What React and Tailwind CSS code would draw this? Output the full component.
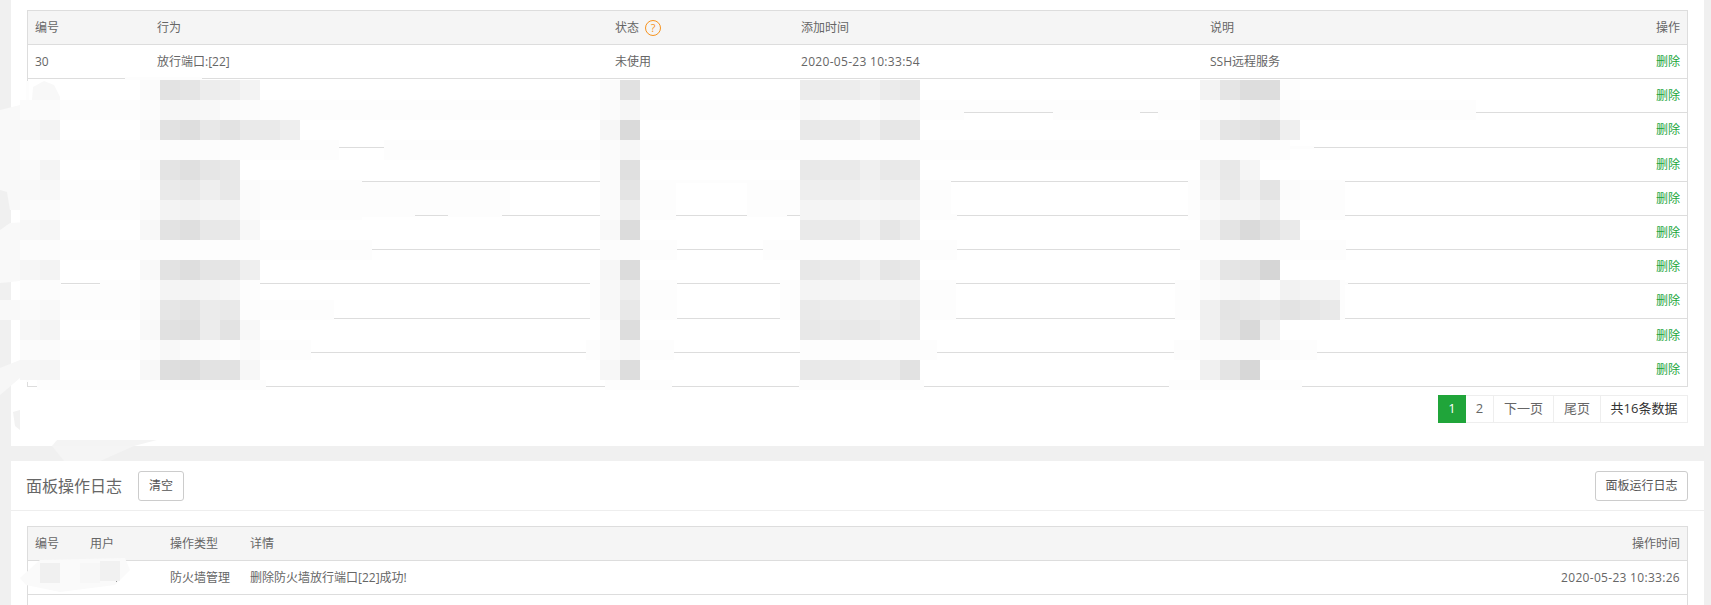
const columns = ['w-[122px]', 'w-[458px]', 'w-[186px]', 'w-[409px]', 'flex-1', 'text-right'];

// tile colours per mosaic block; one line per 20px row starting at y=80
const blocks = [
  { x: 20, rows: [[], ['fb', 'fb'], ['f8', 'f3'], ['fc', 'fc'], ['fa', 'f4'], ['f9', 'f8'], ['fb', 'fb'], ['f8', 'f6'], ['fc', 'fc'], ['f6', 'f3'], ['fc', 'fc'], ['fa', 'f9'], ['f7', 'f4'], ['fb', 'fb'], ['f6', 'f5']] },
  {
    x: 140,
    rows: [
      ['fb', 'e3', 'e5', 'ed', 'ee', 'f3'],
      ['fc', 'f7', 'f7', 'f8', 'fb', 'fc'],
      ['fa', 'e2', 'de', 'e8', 'e3', 'ea', 'ea', 'ee'],
      ['fd', 'fc', 'fc', 'fc', 'fd'],
      ['fb', 'e4', 'e0', 'e6', 'e8'],
      ['fd', 'ea', 'e8', 'ee', 'e8', 'fb'],
      ['fb', 'f3', 'f2', 'f4', 'f4', 'fb'],
      ['f8', 'e3', 'df', 'e8', 'e8', 'f8'],
      ['fd', 'fd', 'fd', 'fd'],
      ['f9', 'e3', 'de', 'e5', 'e5', 'ef'],
      ['fc', 'f4', 'f4', 'f5', 'f7'],
      ['fa', 'e6', 'e3', 'eb', 'e9', 'fd'],
      ['f9', 'e1', 'df', 'ec', 'e3', 'f8'],
      ['fc', 'f8', 'fa', 'fb', 'fd', 'fa'],
      ['f8', 'de', 'dc', 'e3', 'e2', 'f7'],
    ],
  },
  { x: 600, rows: [['fb', 'e1'], ['fb', 'f6'], ['f7', 'da'], ['fb', 'f7'], ['fb', 'e0'], ['fb', 'e4'], ['fb', 'ee'], ['f9', 'dc'], ['fc', 'fc'], ['f7', 'dc'], ['f8', 'ee'], ['f8', 'e8'], ['fb', 'dd'], ['fa', 'f8'], ['f7', 'dd']] },
  {
    x: 800,
    rows: [
      ['ec', 'ec', 'ed', 'f1', 'eb', 'e8'],
      ['f9', 'fa', 'fa', 'fb', 'f8', 'f8'],
      ['e9', 'ea', 'ea', 'f0', 'e7', 'e7'],
      ['fd', 'fd', 'fd', 'fd', 'fd', 'fd'],
      ['e9', 'ea', 'ea', 'f0', 'e9', 'e9'],
      ['ee', 'ee', 'ee', 'f1', 'ef', 'ef'],
      ['f4', 'f5', 'f5', 'f7', 'f5', 'f5'],
      ['ea', 'ea', 'ea', 'f2', 'e6', 'ec'],
      ['fd', 'fd', 'fd', 'fd', 'fd', 'fd'],
      ['e8', 'ea', 'ea', 'f1', 'e6', 'e8'],
      ['f4', 'f5', 'f6', 'f6', 'f6', 'f5'],
      ['ea', 'ec', 'ed', 'ee', 'ee', 'eb'],
      ['e8', 'ea', 'e8', 'e9', 'ec', 'eb'],
      ['fd', 'fd', 'fd', 'fd', 'fd', 'fd'],
      ['e9', 'ea', 'ea', 'ec', 'ec', 'e2'],
    ],
  },
  {
    x: 1200,
    rows: [
      ['f3', 'e5', 'dd', 'dd', 'fd'],
      ['fb', 'fa', 'f8', 'f6', 'fc'],
      ['f4', 'e5', 'e2', 'dd', 'ef'],
      ['fd', 'fd', 'fd', 'fd'],
      ['f2', 'e8', 'f5'],
      ['f4', 'ea', 'f1', 'e4', 'fb'],
      ['f9', 'f5', 'f4', 'ee', 'fd'],
      ['f2', 'e4', 'da', 'e2', 'ea'],
      ['fd', 'fd', 'fd', 'fd'],
      ['f4', 'e5', 'e3', 'd6'],
      ['fb', 'f9', 'f7', 'fb', 'f2', 'f4', 'f4'],
      ['f0', 'e4', 'e7', 'e8', 'e3', 'e6', 'e9'],
      ['f0', 'e6', 'd9', 'f0'],
      ['fc', 'fc', 'fb', 'fb', 'fc'],
      ['f0', 'e4', 'd7'],
    ],
  },
];

// stretches of each table line that the redaction paints over
const lineCovers = {
  78: [[125, 202]],
  112: [[20, 964], [1053, 1140], [1158, 1476]],
  147: [[20, 339], [384, 1314]],
  181: [[20, 362], [602, 951], [1196, 1324]],
  215: [[20, 415], [448, 502], [602, 676], [747, 787], [800, 957], [1188, 1345]],
  249: [[20, 372], [601, 677], [763, 957], [1180, 1346]],
  283: [[20, 61], [100, 260], [595, 677], [780, 944], [1181, 1348]],
  318: [[20, 334], [590, 676], [795, 956], [1175, 1341]],
  352: [[20, 311], [586, 674], [803, 937], [1174, 1317]],
  386: [[37, 266], [605, 672], [799, 924], [1169, 1302]],
};

// faint strokes left by the brush [x, y, w, h]
const bands = [
  [20, 100, 944, 20],
  [964, 100, 512, 12],
  [1053, 113, 87, 7],
  [1158, 113, 318, 7],
  [20, 140, 319, 20],
  [384, 140, 906, 20],
  [60, 180, 302, 40],
  [362, 182, 148, 33],
  [602, 180, 74, 40],
  [747, 180, 204, 35],
  [800, 215, 157, 5],
  [1188, 180, 157, 40],
  [20, 240, 352, 20],
  [601, 240, 76, 20],
  [763, 240, 194, 20],
  [1180, 240, 166, 20],
  [100, 280, 160, 20],
  [60, 285, 40, 15],
  [590, 280, 87, 40],
  [780, 280, 176, 40],
  [1175, 280, 170, 40],
  [20, 300, 314, 20],
  [37, 340, 274, 20],
  [586, 340, 88, 20],
  [803, 340, 134, 20],
  [1174, 340, 143, 20],
  [37, 380, 229, 10],
  [605, 380, 67, 10],
  [799, 380, 125, 10],
  [1169, 380, 133, 10],
];

function Redaction() {
  return (
    <svg className="absolute left-0 top-0 pointer-events-none" width="1711" height="605" shapeRendering="crispEdges">
      {bands.map(([x, y, w, h]) => (
        <rect key={`${x}-${y}`} x={x} y={y} width={w} height={h} fill="#fdfdfd" />
      ))}
      {Object.entries(lineCovers).map(([y, parts]) =>
        parts.map(([a, b]) => <rect key={`${y}-${a}`} x={a} y={Number(y) - 1} width={b - a} height={3} fill="#fdfdfd" />),
      )}
      {/* left table border, mostly painted out */}
      <rect x="26" y="81" width="3" height="122" fill="#fdfdfd" />
      <rect x="26" y="220" width="3" height="162" fill="#fdfdfd" />
      <g shapeRendering="auto">
        <polygon points="0,110 20,105 27,104 27,210 10,210 7,192 0,190" fill="#f9f9f9" />
        <polygon points="0,230 10,223 27,222 27,280 11,282 0,283" fill="#f9f9f9" />
        <polygon points="0,300 20,300 20,320 0,320" fill="#f9f9f9" />
        <polygon points="0,368 20,360 20,378 0,395" fill="#f7f7f7" />
        <polygon points="13,412 20,410 20,430 15,426" fill="#f2f2f2" />
        <polygon points="52,446 57,440 157,440 134,446" fill="#f4f4f4" />
        <polygon points="52,446 134,446 100,461 64,461" fill="#f5f5f5" />
        <polygon points="32,100 33,87 44,81 54,85 60,97 60,100" fill="#f8f8f8" />
        <polygon points="20,578 40,560 125,558 130,570 115,585 60,592 26,585" fill="#fafafa" />
      </g>
      {blocks.map((block) =>
        block.rows.map((row, r) =>
          row.map((c, i) => (
            <rect key={`${block.x}-${r}-${i}`} x={block.x + i * 20} y={80 + r * 20} width="20" height="20" fill={`#${c}${c}${c}`} />
          )),
        ),
      )}
      <rect x="40" y="563" width="20" height="20" fill="#f0f0f0" />
      <rect x="80" y="563" width="20" height="20" fill="#f7f7f7" />
      <rect x="100" y="561" width="20" height="20" fill="#f1f1f1" />
      <rect x="116" y="581" width="1" height="1" fill="#999999" />
    </svg>
  );
}

function HelpIcon() {
  return (
    <span className="ml-1.5 inline-flex h-4 w-4 items-center justify-center rounded-full border border-[#f7931e] text-[11px] leading-none text-[#f7931e]">
      ?
    </span>
  );
}

function Row({ cells, header }) {
  return (
    <div className={`flex items-center border-b border-[#ddd] ${header ? 'h-[34px] bg-[#f5f5f5]' : 'h-[34.2px] pt-px'}`}>
      {cells.map((cell, i) => (
        <div key={i} className={`${columns[i]} shrink-0 px-[7px]`}>
          {cell}
        </div>
      ))}
    </div>
  );
}

function PageButton({ children, className = '' }) {
  return (
    <span className={`flex h-7 items-center justify-center border-y border-r border-[#eee] text-[13px] ${className}`}>
      {children}
    </span>
  );
}

export default function App() {
  const del = <a className="text-[#20a53a]">删除</a>;
  const emptyRow = ['', '', '', '', '', del];

  return (
    <div className="relative h-[605px] overflow-hidden bg-[#f0f0f0] font-['Open_Sans','Noto_Sans_CJK_SC',sans-serif] text-xs text-[#666]">
      <div className="ml-[11px] mr-[7px]">
        <section className="h-[446px] bg-white px-4 pt-2.5">
          <div className="border border-[#ddd] border-b-0">
            <Row
              header
              cells={[
                '编号',
                '行为',
                <span className="flex items-center">状态<HelpIcon /></span>,
                '添加时间',
                '说明',
                '操作',
              ]}
            />
            <Row cells={['30', '放行端口:[22]', '未使用', <span className="tracking-[0.3px]">2020-05-23 10:33:54</span>, 'SSH远程服务', del]} />
            {Array.from({ length: 9 }, (_, i) => (
              <Row key={i} cells={emptyRow} />
            ))}
          </div>
          <div className="mt-2 flex justify-end">
            <span className="flex h-7 w-7 items-center justify-center bg-[#20a53a] text-[13px] text-white">1</span>
            <PageButton className="w-7">2</PageButton>
            <PageButton className="w-[60px]">下一页</PageButton>
            <PageButton className="w-[47px]">尾页</PageButton>
            <PageButton className="w-[87px] text-[#333]">共16条数据</PageButton>
          </div>
        </section>

        <section className="mt-[15px] bg-white">
          <div className="flex h-[50px] items-center border-b border-[#eee] pl-[15px] pr-4">
            <h2 className="text-base font-normal">面板操作日志</h2>
            <button className="ml-4 h-[30px] w-[46px] rounded-[3px] border border-[#ccc] bg-white text-[#555]">清空</button>
            <button className="ml-auto h-[30px] w-[93px] rounded-[3px] border border-[#ccc] bg-white text-[#555]">面板运行日志</button>
          </div>
          <div className="px-4 pt-[15px]">
            <div className="border border-[#ddd]">
              <div className="flex h-[34px] items-center border-b border-[#ddd] bg-[#f5f5f5] px-[7px]">
                <span className="w-[55px]">编号</span>
                <span className="w-[80px]">用户</span>
                <span className="w-[80px]">操作类型</span>
                <span className="flex-1">详情</span>
                <span>操作时间</span>
              </div>
              <div className="flex h-[34px] items-center border-b border-[#ddd] px-[7px]">
                <span className="w-[135px]" />
                <span className="w-[80px]">防火墙管理</span>
                <span className="flex-1">删除防火墙放行端口[22]成功!</span>
                <span className="tracking-[0.3px]">2020-05-23 10:33:26</span>
              </div>
              <div className="h-[34px]" />
            </div>
          </div>
        </section>
      </div>
      <Redaction />
    </div>
  );
}
